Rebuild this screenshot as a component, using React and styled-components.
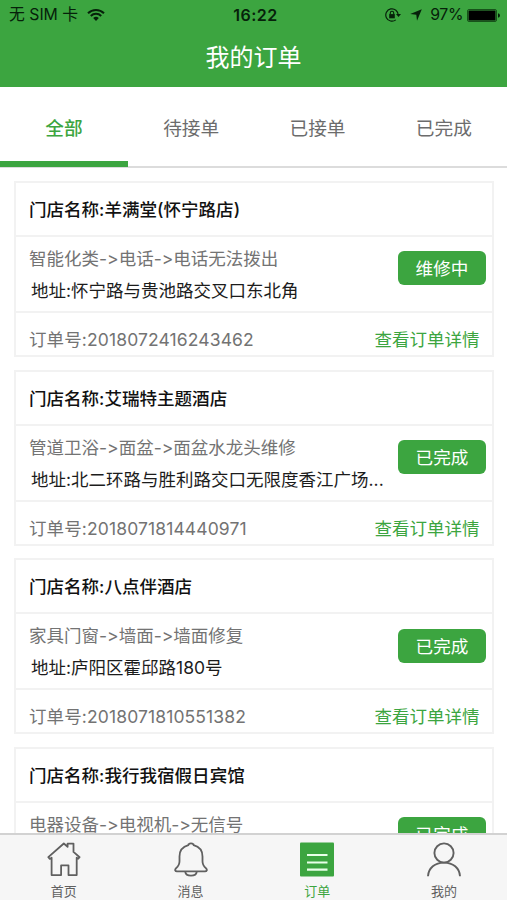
import React from 'react';
import styled, { createGlobalStyle } from 'styled-components';

const GREEN = '#3ca540';

const GlobalStyle = createGlobalStyle`
  *, *::before, *::after { box-sizing: border-box; }
  body {
    margin: 0;
    background: #fff;
    font-family: Inter, "Noto Sans CJK SC", sans-serif;
    font-feature-settings: "calt" 0;
    -webkit-font-smoothing: antialiased;
  }
`;

const Screen = styled.div`
  display: flex;
  flex-direction: column;
  width: 507px;
  height: 900px;
  overflow: hidden;
  background: #fff;
`;

const Header = styled.header`
  flex: none;
  height: 87px;
  background: ${GREEN};
`;

const StatusBar = styled.div`
  display: grid;
  grid-template-columns: 1fr auto 1fr;
  align-items: center;
  height: 30px;
  padding: 0 7px 0 9px;
  color: #06210a;
  font-size: 16px;
  line-height: 30px;
`;

const Carrier = styled.div`
  display: flex;
  align-items: center;
  gap: 9px;
  font-size: 15.8px;
`;

const Clock = styled.div`
  font-size: 16px;
  font-weight: 600;
  letter-spacing: 0.5px;
  padding-left: 2px;
`;

const Indicators = styled.div`
  display: flex;
  align-items: center;
  justify-content: flex-end;
`;

const Percent = styled.span`
  margin: 0 4px 0 8px;
  font-size: 15.8px;
  letter-spacing: -0.4px;
`;

const Title = styled.h1`
  margin: 0;
  height: 56px;
  color: #fff;
  font-size: 24px;
  font-weight: 400;
  line-height: 56px;
  text-align: center;
`;

const Tabs = styled.nav`
  display: grid;
  grid-template-columns: 128px repeat(3, 1fr);
  flex: none;
  height: 81px;
  border-bottom: 2px solid #dcdcdc;
`;

const Tab = styled.div`
  height: 80px;
  border-bottom: 6px solid ${(p) => (p.$active ? GREEN : 'transparent')};
  color: ${(p) => (p.$active ? GREEN : '#6c6c6c')};
  font-size: 18.7px;
  font-weight: ${(p) => (p.$active ? 500 : 400)};
  line-height: 84px;
  text-align: center;
`;

const OrderList = styled.main`
  flex: 1;
  min-height: 0;
  padding: 13px 13px 0 14px;
  overflow: hidden;
`;

const Card = styled.article`
  height: 176px;
  margin-bottom: 12.7px;
  border: 2px solid #f2f2f2;
`;

const Store = styled.h2`
  margin: 0;
  height: 54px;
  padding-left: 13px;
  border-bottom: 2px solid #f2f2f2;
  color: #111;
  font-size: 17.55px;
  font-weight: 500;
  line-height: 53px;
`;

const Body = styled.div`
  display: flex;
  justify-content: space-between;
  height: 76px;
  padding: 6px 6px 0 13px;
  border-bottom: 2px solid #f2f2f2;
`;

const Details = styled.div`
  line-height: 32px;
  font-size: 17.5px;
  white-space: nowrap;
`;

const Category = styled.div`
  color: #737373;
`;

const Address = styled.div`
  padding-left: 2px;
  color: #1c1c1c;
`;

const Status = styled.span`
  flex: none;
  width: 88px;
  height: 34px;
  margin-top: 8.3px;
  border-radius: 6px;
  background: ${GREEN};
  color: #fff;
  font-size: 17.6px;
  line-height: 36px;
  text-align: center;
`;

const Footer = styled.div`
  display: flex;
  justify-content: space-between;
  padding: 0 12.5px 0 13px;
  font-size: 17.5px;
  line-height: 53.5px;
`;

const OrderNo = styled.span`
  color: #737373;
  letter-spacing: 0.12px;
`;

const DetailLink = styled.a`
  color: ${GREEN};
`;

const TabBar = styled.nav`
  display: grid;
  grid-template-columns: repeat(4, 1fr);
  flex: none;
  height: 67px;
  border-top: 2px solid #d2d2d2;
  background: #f6f6f6;
`;

const NavItem = styled.div`
  display: flex;
  flex-direction: column;
  align-items: center;
  padding: 7px 0 0 1px;
  color: ${(p) => (p.$active ? GREEN : '#606060')};
  font-size: 13px;
  line-height: 20px;

  svg { margin-bottom: 4px; }
`;

const WifiIcon = () => (
  <svg width="18" height="14" viewBox="0 0 18 14" fill="none" stroke="currentColor" strokeWidth="2">
    <path d="M1 5.2a11.3 11.3 0 0 1 16 0M3.8 8a7.3 7.3 0 0 1 10.4 0" />
    <path d="M9 13 6.2 10.1a4 4 0 0 1 5.6 0Z" fill="currentColor" stroke="none" />
  </svg>
);

const RotationLockIcon = () => (
  <svg width="16" height="14" viewBox="0 0 16 14" fill="none" stroke="currentColor">
    <path d="M13.2 7A6.2 6.2 0 1 0 10.8 11.9" strokeWidth="1.2" />
    <path d="M11 6h5l-2.5 3z" fill="currentColor" stroke="none" />
    <rect x="4.2" y="6.1" width="5.6" height="4.2" fill="currentColor" stroke="none" />
    <path d="M5.3 6.4V5a1.7 1.7 0 0 1 3.4 0v1.4" strokeWidth="1.1" />
  </svg>
);

const LocationIcon = styled(({ className }) => (
  <svg className={className} width="12" height="12" viewBox="0 0 12 12" fill="currentColor">
    <path d="M11.8.2 7 11.8 6.3 5.7.2 5.1Z" />
  </svg>
))`
  margin-left: 9px;
`;

const BatteryIcon = () => (
  <svg width="33" height="13" viewBox="0 0 33 13">
    <rect x=".5" y=".5" width="29" height="12" rx="1.5" fill="none" stroke="#17531a" />
    <rect x="1.5" y="1.5" width="27" height="10" rx=".5" fill="#000" />
    <path d="M31 4.2q2 .4 2 2.3t-2 2.3z" fill="#06210a" />
  </svg>
);

const HomeIcon = () => (
  <svg width="34" height="35" viewBox="0 0 34 35" fill="none" stroke="#606060" strokeWidth="1.8" strokeLinejoin="round">
    <path d="M1.3 15.2 16.8 1.5l3.800 3.300V1.600h5.900v8.300l6.100 5.300-1.400 1.500-1.500-.9v17.300h-8.200v-9.700h-7.400v9.700H4.600V15.700l-1.800 1.200Z" />
  </svg>
);

const BellIcon = () => (
  <svg width="34" height="35" viewBox="0 0 34 35" fill="none" stroke="#606060" strokeWidth="1.8" strokeLinejoin="round">
    <path d="M14.400 3.200V2.500Q17 .2 19.600 2.500v.7c5.500 1.500 8.900 5.700 8.900 11.300v4.800c0 3 1 5 3.500 7 1.500 1.500.9 3-1 3H3c-1.900 0-2.500-1.500-1-3 2.500-2 3.500-4 3.500-7v-4.800c0-5.600 3.400-9.800 8.900-11.300Z" />
    <path d="M11.300 29.900c.5 5 10.900 5 11.400 0" />
  </svg>
);

const OrdersIcon = () => (
  <svg width="34" height="35" viewBox="0 0 34 35">
    <rect y=".5" width="34" height="34" rx="1" fill={GREEN} />
    <path d="M7 13h20.500M7 20.500h20.500M7 27.700h20.500" stroke="#e8ffe8" strokeWidth="2.200" />
  </svg>
);

const PersonIcon = () => (
  <svg width="34" height="35" viewBox="0 0 34 35" fill="none" stroke="#606060" strokeWidth="1.900">
    <circle cx="17" cy="11" r="9.600" />
    <path d="M1 34.200C1.500 26 8 20.600 17 20.600S32.500 26 33 34.200" />
  </svg>
);

const tabs = ['全部', '待接单', '已接单', '已完成'];

const orders = [
  { store: '羊满堂(怀宁路店)', category: '智能化类->电话->电话无法拨出', address: '怀宁路与贵池路交叉口东北角', no: '2018072416243462', status: '维修中' },
  { store: '艾瑞特主题酒店', category: '管道卫浴->面盆->面盆水龙头维修', address: '北二环路与胜利路交口无限度香江广场...', no: '2018071814440971', status: '已完成' },
  { store: '八点伴酒店', category: '家具门窗->墙面->墙面修复', address: '庐阳区霍邱路180号', no: '2018071810551382', status: '已完成' },
  { store: '我行我宿假日宾馆', category: '电器设备->电视机->无信号', address: '', no: '', status: '已完成' },
];

const navItems = [
  { label: '首页', Icon: HomeIcon },
  { label: '消息', Icon: BellIcon },
  { label: '订单', Icon: OrdersIcon, active: true },
  { label: '我的', Icon: PersonIcon },
];

function OrderCard({ order }) {
  return (
    <Card>
      <Store>门店名称:{order.store}</Store>
      <Body>
        <Details>
          <Category>{order.category}</Category>
          {order.address && <Address>地址:{order.address}</Address>}
        </Details>
        <Status>{order.status}</Status>
      </Body>
      {order.no && (
        <Footer>
          <OrderNo>订单号:{order.no}</OrderNo>
          <DetailLink>查看订单详情</DetailLink>
        </Footer>
      )}
    </Card>
  );
}

export default function App() {
  return (
    <>
      <GlobalStyle />
      <Screen>
        <Header>
          <StatusBar>
            <Carrier>无 SIM 卡 <WifiIcon /></Carrier>
            <Clock>16:22</Clock>
            <Indicators>
              <RotationLockIcon />
              <LocationIcon />
              <Percent>97%</Percent>
              <BatteryIcon />
            </Indicators>
          </StatusBar>
          <Title>我的订单</Title>
        </Header>
        <Tabs>
          {tabs.map((label, i) => <Tab key={label} $active={i === 0}>{label}</Tab>)}
        </Tabs>
        <OrderList>
          {orders.map((order) => <OrderCard key={order.store} order={order} />)}
        </OrderList>
        <TabBar>
          {navItems.map(({ label, Icon, active }) => (
            <NavItem key={label} $active={active}><Icon />{label}</NavItem>
          ))}
        </TabBar>
      </Screen>
    </>
  );
}
